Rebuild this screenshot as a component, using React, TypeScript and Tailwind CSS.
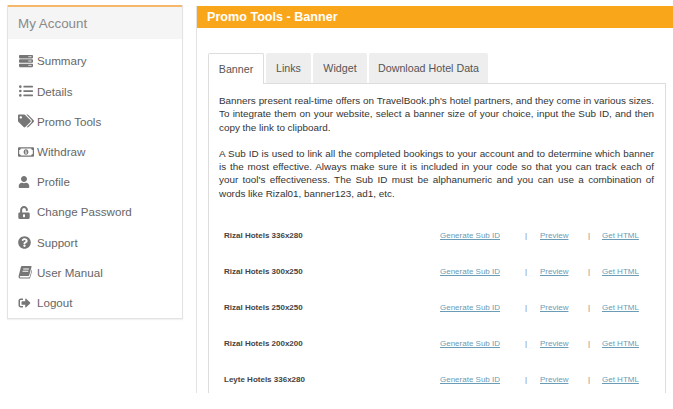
import type { ComponentType } from "react";
import { FaListUl, FaQuestionCircle, FaRegMoneyBillAlt, FaServer, FaSignOutAlt, FaTags, FaUnlockAlt, FaUser } from "react-icons/fa";

// slanted book, the one in the package stands upright
const BookIcon = ({ className }: { className?: string }) => (
  <svg viewBox="0 0 16 16" className={className} fill="currentColor">
    <path d="M4.6 1h10.2c.6 0 .9.5.7 1l-2.7 9.6c-.2.7-.7 1-1.3 1H2.7c-.5 0-.8.5-.6 1 .1.4.5.6.9.6h9.6c.3 0 .6-.2.7-.5l2.5-8.7.7.5-2.6 9c-.2.6-.7 1-1.3 1H2.8c-1 0-1.9-.8-2.1-1.9-.1-.5-.1-.9.1-1.4L3.4 2.1C3.6 1.4 4 1 4.6 1zM6 4v1h6.4l.3-1H6zm-.8 2.6v1h6.4l.3-1H5.2z" fillRule="evenodd" />
  </svg>
);

const menu: { label: string; icon: ComponentType<{ className?: string }>; size: string }[] = [
  { label: "Summary", icon: FaServer, size: "h-[14px] w-[16px]" },
  { label: "Details", icon: FaListUl, size: "h-[14px] w-[16px]" },
  { label: "Promo Tools", icon: FaTags, size: "h-[14px] w-[16px]" },
  { label: "Withdraw", icon: FaRegMoneyBillAlt, size: "h-[14px] w-[16px]" },
  { label: "Profile", icon: FaUser, size: "h-[12px] w-[12px]" },
  { label: "Change Password", icon: FaUnlockAlt, size: "h-[13px] w-[12px]" },
  { label: "Support", icon: FaQuestionCircle, size: "h-[13px] w-[13px]" },
  { label: "User Manual", icon: BookIcon, size: "h-[14px] w-[14px]" },
  { label: "Logout", icon: FaSignOutAlt, size: "h-[12px] w-[13px]" },
];

const banners = ["Rizal Hotels 336x280", "Rizal Hotels 300x250", "Rizal Hotels 250x250", "Rizal Hotels 200x200", "Leyte Hotels 336x280"];

const App = () => {
  return (
    <div className="flex h-[409px] w-[673px] items-start overflow-hidden bg-white font-['Liberation_Sans',Arial,sans-serif]">
      <aside className="ml-[7px] mt-[5px] h-[314px] w-[176px] shrink-0 border border-t-0 border-[#e3e3e3] shadow-[0_1px_1px_rgba(0,0,0,0.05)]">
        <div className="h-[34px] border-t-2 border-[#f5b769] bg-[#f5f5f5] pl-[10px] pt-[7px] text-[13.4px] leading-[20px] text-[#8a8a8a]">My Account</div>
        <ul className="pt-[7px]">
          {menu.map(({ label, icon: Icon, size }) => (
            <li key={label} className="flex h-[30.2px] items-center pl-[10px] text-[11.6px] text-[#666666]">
              <span className="flex w-[19px] shrink-0 items-center">
                <Icon className={`${size} text-[#767676]`} />
              </span>
              {label}
            </li>
          ))}
        </ul>
      </aside>
      <main className="ml-[13px] mt-[6px] h-[387px] w-[477px] shrink-0 border-l border-[#e3e3e3]">
        <h1 className="h-[22px] bg-[#faa61a] pl-[10px] text-[12.6px] font-bold leading-[22px] text-white">Promo Tools - Banner</h1>
        <div className="ml-[11px] mr-[7px] mt-[25px]">
          <div className="flex h-[30px] gap-[2px] whitespace-nowrap text-[10.7px] text-[#555555]">
            <div className="z-10 flex h-[31px] w-[56px] items-center justify-center rounded-t-[2px] border border-b-0 border-[#dddddd] bg-white">Banner</div>
            <div className="flex w-[45px] items-center justify-center rounded-t-[2px] bg-[#eeeeee]">Links</div>
            <div className="flex w-[54px] items-center justify-center rounded-t-[2px] bg-[#eeeeee]">Widget</div>
            <div className="flex w-[119px] items-center justify-center rounded-t-[2px] bg-[#eeeeee]">Download Hotel Data</div>
          </div>
          <div className="h-[310px] overflow-hidden border-l border-r border-t border-[#dddddd] pl-[10px] pr-[11px] pt-[10px] text-[9.9px] leading-[13.4px] text-[#333333]">
            <p className="text-justify">
              Banners present real-time offers on TravelBook.ph's hotel partners, and they come in various sizes. To integrate them on your website, select a banner size of your choice, input the Sub ID, and then copy the link to clipboard.
            </p>
            <p className="mt-[12.4px] text-justify">
              A Sub ID is used to link all the completed bookings to your account and to determine which banner is the most effective. Always make sure it is included in your code so that you can track each of your tool's effectiveness. The Sub ID must be alphanumeric and you can use a combination of words like Rizal01, banner123, ad1, etc.
            </p>
            <div className="mt-[17px] text-[8px]">
              {banners.map((name) => (
                <div key={name} className="flex h-[36px] items-center pl-[5px] text-[#6a9cb5]">
                  <span className="w-[216px] font-bold text-[#444444]">{name}</span>
                  <a className="w-[85px] underline">Generate Sub ID</a>
                  <span className="w-[15px] text-[#888888]">|</span>
                  <a className="w-[48px] underline">Preview</a>
                  <span className="w-[14px] text-[#888888]">|</span>
                  <a className="underline">Get HTML</a>
                </div>
              ))}
            </div>
          </div>
        </div>
      </main>
    </div>
  );
};

export default App;
